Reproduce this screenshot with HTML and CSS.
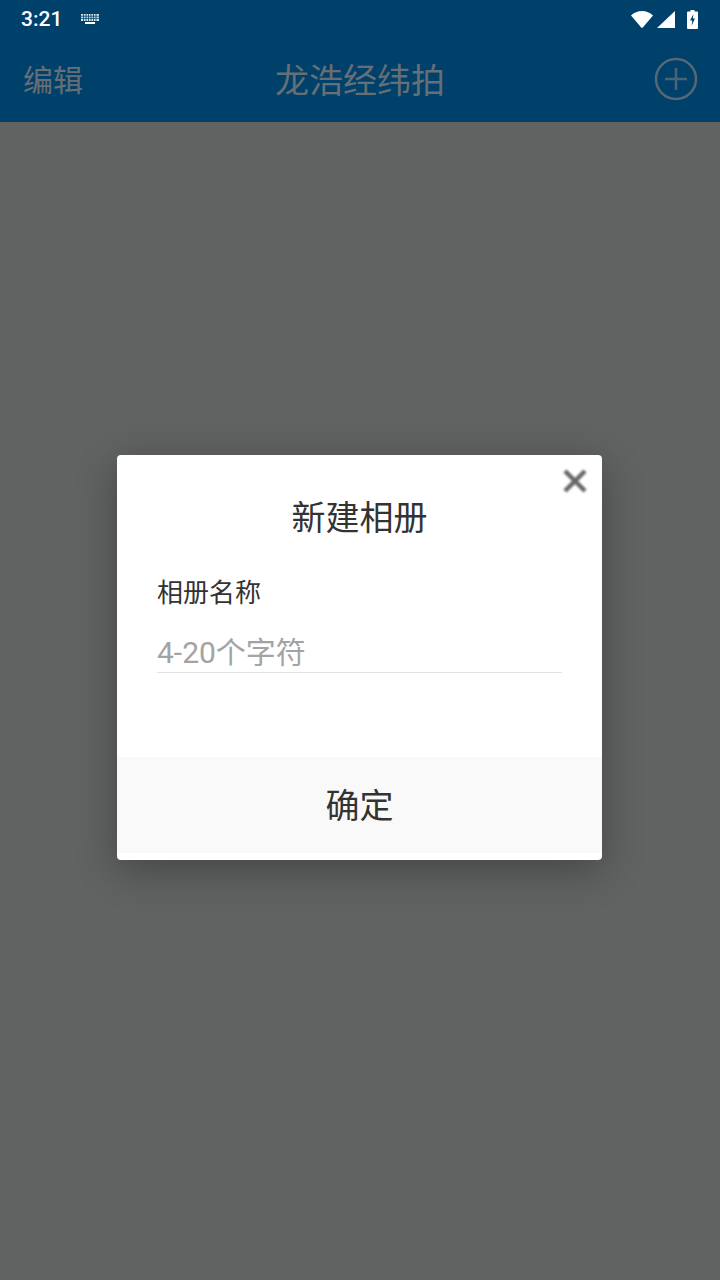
FILE: index.html
```html
<!DOCTYPE html>
<html lang="zh-CN">
    <head>
        <meta charset="utf-8">
        <meta name="viewport" content="width=device-width, initial-scale=1">
        <link rel="stylesheet" href="styles.css">
        <title>龙浩经纬拍</title>
    </head>
    <body>
        <div class="screen">
            <div class="statusBar">
                <span class="clock">3:21</span>
                <svg class="keyboardIcon" width="20" height="12" viewBox="0 0 20 12">
                    <path fill="#fff" d="M1 1h18v7H1z" opacity=".85"/>
                    <path stroke="#00416b" stroke-width=".8" d="M1 3.2h18M1 5.4h18M3.5 1v7M6 1v7M8.5 1v7M11 1v7M13.5 1v7M16 1v7"/>
                    <path fill="#fff" d="M5 9h10v2H5z"/>
                </svg>
                <div class="statusIcons">
                    <svg class="wifiIcon" width="22" height="17" viewBox="0 0 22 17"><path fill="#fff" d="M0 4.500C3 1.700 6.800 0 11 0s8 1.700 11 4.500L12 16.200a1.300 1.300 0 0 1-2 0z"/></svg>
                    <svg class="signalIcon" width="18" height="17" viewBox="0 0 18 17"><path fill="#fff" d="M18 0v17H0z"/></svg>
                    <svg width="11" height="19" viewBox="0 0 11 19">
                        <path fill="#fff" d="M3.500 0h4v1.500H10a1 1 0 0 1 1 1V18a1 1 0 0 1-1 1H1a1 1 0 0 1-1-1V2.500a1 1 0 0 1 1-1h2.500z"/>
                        <path fill="#00416b" d="M6.500 4 3 10.500h2.300L4.500 16 8 8.500H5.800z"/>
                    </svg>
                </div>
            </div>
            <div class="navBar">
                <span class="navEdit">编辑</span>
                <span class="navTitle">龙浩经纬拍</span>
                <svg class="navAdd" width="44" height="44" viewBox="0 0 44 44" fill="none">
                    <circle cx="22" cy="22" r="20" stroke="#566875" stroke-width="2.500"/>
                    <path stroke="#4a6375" stroke-width="2.500" d="M22 11v22M11 22h22"/>
                </svg>
            </div>
            <div class="backdrop">
                <div class="dialog">
                    <svg class="closeIcon" width="24" height="24" viewBox="0 0 24 24">
                        <path stroke="#666" stroke-width="4.500" d="M2 2l20 20M22 2L2 22"/>
                    </svg>
                    <div class="dialogTitle">新建相册</div>
                    <div class="fieldLabel">相册名称</div>
                    <div class="fieldInput">4-20个字符</div>
                    <div class="dialogFooter">确定</div>
                </div>
            </div>
        </div>
    </body>
</html>
```

FILE: styles.css
```css
html, body {
    margin: 0;
    padding: 0;
}

body {
    font-family: Roboto, "Noto Sans CJK SC", sans-serif;
    background-color: #616362;
}

.screen {
    width: 720px;
    height: 1280px;
    display: flex;
    flex-direction: column;
    overflow: hidden;
}

.statusBar {
    height: 38px;
    padding: 0 22px 0 21px;
    display: flex;
    align-items: center;
    background-color: #00416b;
    color: #fff;
}

.clock {
    font-size: 21px;
    font-weight: 500;
}

.keyboardIcon {
    margin-left: 18px;
}

.statusIcons {
    margin-left: auto;
    display: flex;
    align-items: center;
    gap: 12px;
}

.wifiIcon {
    margin-right: -8px;
}

.navBar {
    height: 84px;
    box-sizing: border-box;
    padding: 0 22px 4px 23px;
    display: flex;
    align-items: center;
    justify-content: space-between;
    position: relative;
    background-color: #00416b;
}

.navEdit {
    font-size: 30px;
    color: #666f75;
}

.navTitle {
    position: absolute;
    left: 0;
    right: 0;
    text-align: center;
    font-size: 34px;
    color: #666f75;
}

.navAdd {
    margin-top: 2px;
    filter: blur(0.4px);
}

.backdrop {
    flex: 1;
    display: flex;
    justify-content: center;
    align-items: flex-start;
    background-color: #616362;
}

.dialog {
    position: relative;
    width: 485px;
    height: 405px;
    margin-top: 333px;
    margin-left: -1px;
    box-sizing: border-box;
    padding-top: 39px;
    background-color: #fff;
    border-radius: 4px;
    box-shadow: 0 10px 40px rgba(0, 0, 0, 0.3);
}

.closeIcon {
    position: absolute;
    top: 14px;
    right: 15px;
    filter: blur(1px);
}

.dialogTitle {
    height: 48px;
    line-height: 48px;
    text-align: center;
    font-size: 34px;
    color: #333;
}

.fieldLabel {
    margin: 33px 40px 0;
    height: 36px;
    line-height: 36px;
    font-size: 26px;
    color: #333;
}

.fieldInput {
    margin: 20px 40px 0;
    height: 41px;
    line-height: 43px;
    font-size: 30px;
    color: #a3a3a3;
    border-bottom: 1px solid #e3e3e3;
}

.dialogFooter {
    margin-top: 84px;
    height: 96px;
    line-height: 98px;
    text-align: center;
    font-size: 34px;
    color: #333;
    background-color: #f9f9f9;
}
```
